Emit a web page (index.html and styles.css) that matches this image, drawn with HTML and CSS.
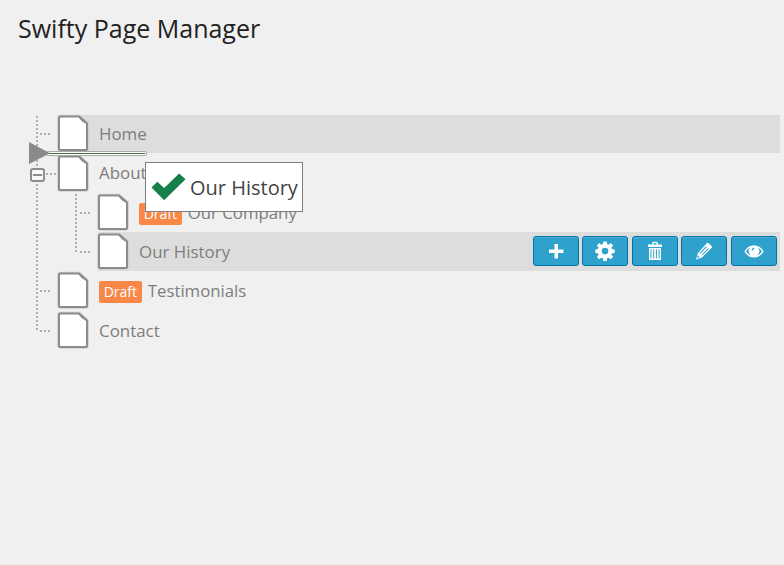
FILE: index.html
```html
<!DOCTYPE html>
<html lang="en">
<head>
<meta charset="utf-8">
<title>Swifty Page Manager</title>
<link rel="stylesheet" href="styles.css">
</head>
<body>
<svg width="0" height="0" class="defs">
  <symbol id="page" viewBox="0 0 32 38">
    <path d="M3.500 2.500H22L25.500 6.500L30 9.500V34.500Q30 36 28.500 36H3.500Q2 36 2 34.500V4Q2 2.500 3.500 2.500Z" fill="none" stroke="#cfcfcf" stroke-width="3.6"/>
    <path d="M3.500 2.500H22L25.500 6.500L30 9.500V34.500Q30 36 28.500 36H3.500Q2 36 2 34.500V4Q2 2.500 3.500 2.500Z" fill="#fff" stroke="#8c8c8c" stroke-width="2"/>
    <path d="M22 2.500L24.500 3L29.300 7.500L30 9.500L25.500 7Z" fill="#8c8c8c"/>
  </symbol>
</svg>
<h1>Swifty Page Manager</h1>
<main class="tree">
  <ul class="level root">
    <li>
      <div class="row tall lit"><svg class="page"><use href="#page"/></svg><span>Home</span></div>
    </li>
    <li>
      <div class="row about"><i class="toggle"></i><svg class="page"><use href="#page"/></svg><span>About</span></div>
      <ul class="level child">
        <li>
          <div class="row short"><svg class="page"><use href="#page"/></svg><b class="badge">Draft</b><span>Our Company</span></div>
        </li>
        <li>
          <div class="row lit tall history"><svg class="page"><use href="#page"/></svg><span>Our History</span>
            <div class="actions">
              <button><svg viewBox="0 0 20 20"><path d="M8.500 3h3.500V8.500h5.500V12H12v5.500H8.500V12H3V8.500h5.500z"/></svg></button>
              <button><svg viewBox="0 0 20 20"><path fill-rule="evenodd" d="M8.300.500h3.400l.4 2.600 1.500.6 2.200-1.600 2.300 2.300-1.600 2.200.6 1.500 2.600.4v3.400l-2.600.4-.6 1.500 1.600 2.200-2.300 2.300-2.200-1.600-1.500.6-.4 2.600H8.300l-.4-2.600-1.500-.6-2.200 1.600-2.300-2.300 1.600-2.200-.6-1.500-2.600-.4V8.500l2.600-.4.6-1.500-1.600-2.200 2.300-2.300 2.200 1.600 1.500-.6zM10 6.800a3.300 3.300 0 1 0 0 6.600 3.300 3.300 0 0 0 0-6.600z"/></svg></button>
              <button><svg viewBox="0 0 20 20"><path fill-rule="evenodd" d="M3 3.500h4C7 1.300 8 .8 10 .8s3 .5 3 2.700h4v2.600H3zM8.300 3.500h3.400c0-1-.5-1.400-1.700-1.400s-1.700.4-1.700 1.400zM4 7h12v12H4zM5.500 8.200v9.300h1V8.200zM8.200 8.200v9.300h1V8.200zM10.900 8.200v9.300h1V8.200zM13.600 8.200v9.300h1V8.200z"/></svg></button>
              <button><svg viewBox="0 0 20 20"><path fill-rule="evenodd" d="M12.700 2.200q.8-.8 2 .1l2.800 2.800q.8 1 .1 1.800L8 16.500l-6 2 2-6.500zM12 5.300l-6.500 6.600.8.8 6.500-6.600zM14 7.300l-6.500 6.600.8.7 6.500-6.500zM3.900 14.300l-.7 2.800 2.600-.9z"/></svg></button>
              <button><svg viewBox="0 0 20 20"><path fill-rule="evenodd" d="M.3 10.500Q4 4.200 10 4.200t9.700 6.300Q16 16.500 10 16.500T.3 10.500zM2 10.500q1.800 2.700 4.600 4A6 6 0 0 1 6 6.600q-2.500 1.300-4 3.900zM18 10.500q-1.500-2.600-4-3.900a6 6 0 0 1-.6 7.900q2.800-1.300 4.600-4zM9.900 6.600Q8 7.200 7.300 9.300l1.300.5q.4-1.500 1.900-2z"/></svg></button>
            </div>
          </div>
        </li>
      </ul>
    </li>
    <li>
      <div class="row tall"><svg class="page"><use href="#page"/></svg><b class="badge">Draft</b><span>Testimonials</span></div>
    </li>
    <li>
      <div class="row"><svg class="page"><use href="#page"/></svg><span>Contact</span></div>
    </li>
  </ul>
  <svg class="marker" viewBox="0 0 120 24"><rect x="18" y="10" width="101" height="5" rx="2.500" fill="#aaa"/><rect x="18" y="11" width="100" height="3" rx="1.500" fill="#fff"/><path d="M18 12.500H117" stroke="#3d713d" stroke-width="1"/><path d="M1 1L22 12.300L1 23Z" fill="#8a8a8a"/></svg>
  <div class="drag"><svg viewBox="0 0 36 30"><path d="M.5 15.500L6.500 9.500L13.500 16L29 1L35.500 7L13.500 28.500Z" fill="#17804a"/></svg><span>Our History</span></div>
</main>
</body>
</html>
```

FILE: styles.css
```css
* { box-sizing: border-box; }
body {
  margin: 0;
  background: #f0f0f0;
  color: #7d7d7d;
  font: 16.9px/38px "Open Sans", sans-serif;
}
.defs { position: absolute; }
h1 {
  margin: 0;
  padding: 11px 0 0 18px;
  height: 115px;
  font-size: 25px;
  line-height: 34px;
  font-weight: 400;
  color: #222;
}
.tree { position: relative; margin-right: 4px; }
ul { list-style: none; margin: 0; padding: 0; }
.level { position: relative; }
.root { padding-left: 58px; }
.child { padding-left: 40px; }
.level::before {
  content: "";
  position: absolute;
  left: 36px;
  top: 1px;
  width: 2px;
  height: 216px;
  background: repeating-linear-gradient(#adadad 0 2px, transparent 2px 4px);
}
.child::before { left: 17px; top: 0; height: 59px; }
.row {
  position: relative;
  display: flex;
  align-items: flex-start;
  height: 39px;
}
.row.tall { height: 40px; }
.row.short { height: 38px; }
.row::before {
  content: "";
  position: absolute;
  left: -18px;
  top: 18px;
  width: 12px;
  height: 2px;
  background: repeating-linear-gradient(90deg, #adadad 0 2px, transparent 2px 4px);
}
.about span { margin-top: -1px; }
.about::before { left: -12px; width: 10px; }
.lit { background: linear-gradient(#ddd, #ddd) 0 0 / 100% 38px no-repeat; }
.history { background-size: 100% 39px; }
.history > span { margin-top: 1px; }
.page { flex: none; width: 32px; height: 38px; margin: -1px 10px 0 -1px; }
.history .page { margin-top: 0; }
.history::before { top: 19px; }
.toggle {
  position: absolute;
  left: -28px;
  top: 13px;
  width: 15px;
  height: 14px;
  border: 2px solid #8c8c8c;
  border-radius: 3px;
  background: linear-gradient(#8c8c8c, #8c8c8c) center / 9px 2px no-repeat #f8f8f8;
}
.badge {
  height: 22px;
  margin: 9px 6px 0 0;
  padding: 0 4.7px;
  border-radius: 2px;
  background: #f88748;
  color: #fff;
  font-size: 14px;
  font-weight: 400;
  line-height: 21px;
}
.badge + span { font-size: 16.8px; }
.actions { display: flex; gap: 3.6px; margin: 4px 3px 0 auto; }
.actions button {
  display: flex;
  align-items: center;
  justify-content: center;
  width: 46px;
  height: 30px;
  padding: 0;
  border: 1px solid #0074a2;
  border-radius: 3px;
  background: #2ea2cc;
  box-shadow: inset 0 1px 0 #4aafd4;
}
.actions svg { width: 20px; height: 20px; fill: #fff; }
.marker { position: absolute; left: 28px; top: 26px; width: 120px; height: 24px; }
.drag {
  position: absolute;
  left: 145px;
  top: 47px;
  display: flex;
  align-items: center;
  gap: 4px;
  width: 158px;
  height: 50px;
  padding-left: 5px;
  border: 1px solid #808080;
  background: #fff;
  color: #444;
  font-size: 20px;
  white-space: nowrap;
}
.drag svg { flex: none; width: 35px; height: 30px; }
.drag span { padding-top: 2px; }
```
